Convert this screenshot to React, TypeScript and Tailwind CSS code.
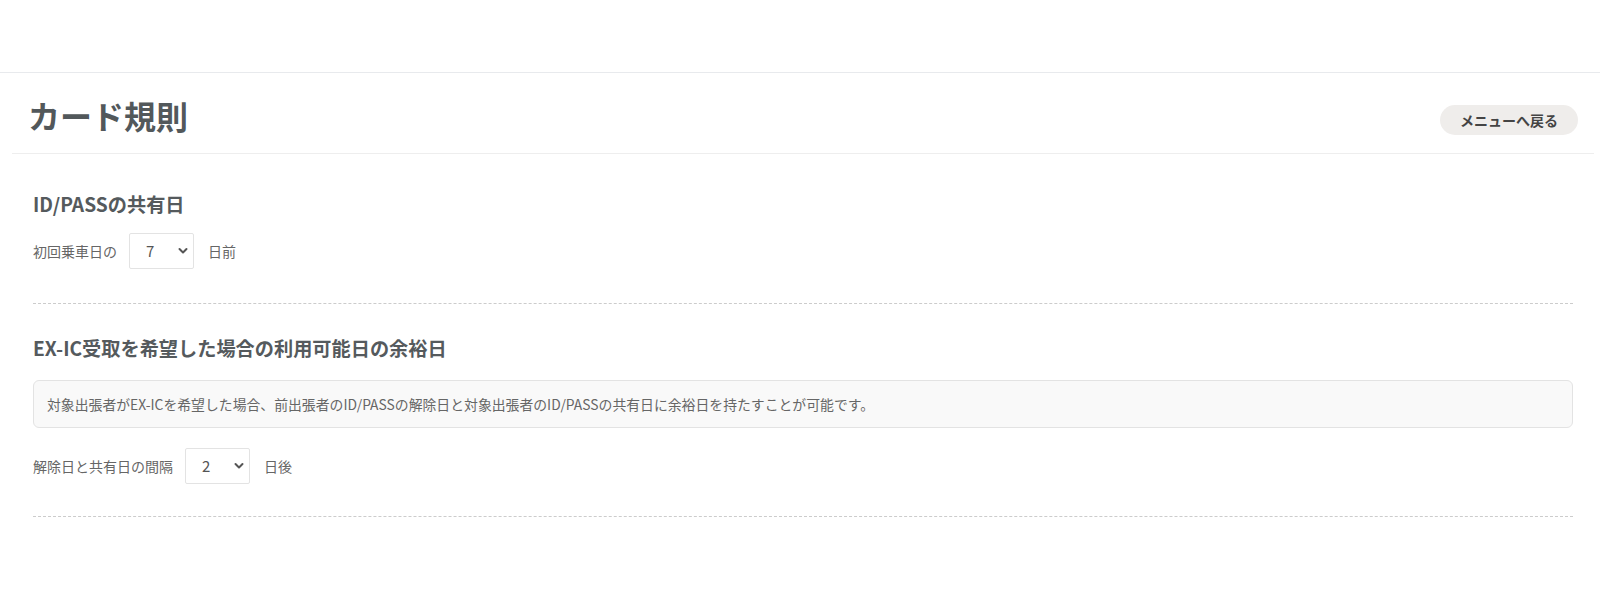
import React from "react";

const font = { fontFamily: '"Noto Sans CJK JP", "Open Sans", sans-serif' };

function Chevron() {
  return (
    <svg width="10" height="7" viewBox="0 0 10 7" className="pointer-events-none absolute right-[6px] top-1/2 -translate-y-1/2">
      <path d="M1.5 1.5 L5 5 L8.5 1.5" fill="none" stroke="#555" strokeWidth="2" strokeLinecap="round" strokeLinejoin="round" />
    </svg>
  );
}

function NumSelect({ value, options }: { value: string; options: string[] }) {
  return (
    <div className="relative mx-3 h-9 w-[65px]">
      <select
        defaultValue={value}
        className="h-full w-full appearance-none rounded-[2px] border border-[#e3e3e3] bg-white pl-[16px] text-[15px] text-[#555] outline-none"
        style={font}
      >
        {options.map((o) => (
          <option key={o} value={o}>
            {o}
          </option>
        ))}
      </select>
      <Chevron />
    </div>
  );
}

export default function App() {
  const opts = ["0", "1", "2", "3", "4", "5", "6", "7", "8", "9", "10"];
  return (
    <div className="min-h-[600px] w-full bg-white text-[#555]" style={font}>
      <div className="h-[73px] border-b border-[#e8eaed]" />
      <div className="ml-3 mr-[6px]">
        <div className="flex h-[81px] items-start justify-between border-b border-[#eeeeee] pl-4 pr-4">
          <h1 className="mt-[26px] text-[32px] font-bold leading-none text-[#52585b]">カード規則</h1>
          <button className="mt-[32px] h-[30px] rounded-full bg-[#efedeb] px-[20px] text-[14px] font-bold leading-none text-[#444]">
            メニューへ戻る
          </button>
        </div>
        <div className="px-[21px]">
          <section className="border-b border-dashed border-[#cccccc] pt-[35px] pb-[34px]">
            <h2 className="text-[19.2px] font-bold leading-[30px] text-[#555a5d]">ID/PASSの共有日</h2>
            <div className="mt-[14px] flex items-center text-[14px] text-[#666]">
              <span>初回乗車日の</span>
              <NumSelect value="7" options={opts} />
              <span className="ml-[2px]">日前</span>
            </div>
          </section>
          <section className="border-b border-dashed border-[#cccccc] pt-[29px] pb-[32px]">
            <h2 className="text-[19.2px] font-bold leading-[30px] text-[#555a5d]">EX-IC受取を希望した場合の利用可能日の余裕日</h2>
            <div className="mt-[17px] flex h-[48px] items-center rounded-md border border-[#e3e3e3] bg-[#f9f9f9] pl-[13px] text-[13.85px] text-[#666]">
              対象出張者がEX-ICを希望した場合、前出張者のID/PASSの解除日と対象出張者のID/PASSの共有日に余裕日を持たすことが可能です。
            </div>
            <div className="mt-[20px] flex items-center text-[14px] text-[#666]">
              <span>解除日と共有日の間隔</span>
              <NumSelect value="2" options={opts} />
              <span className="ml-[2px]">日後</span>
            </div>
          </section>
        </div>
      </div>
    </div>
  );
}
